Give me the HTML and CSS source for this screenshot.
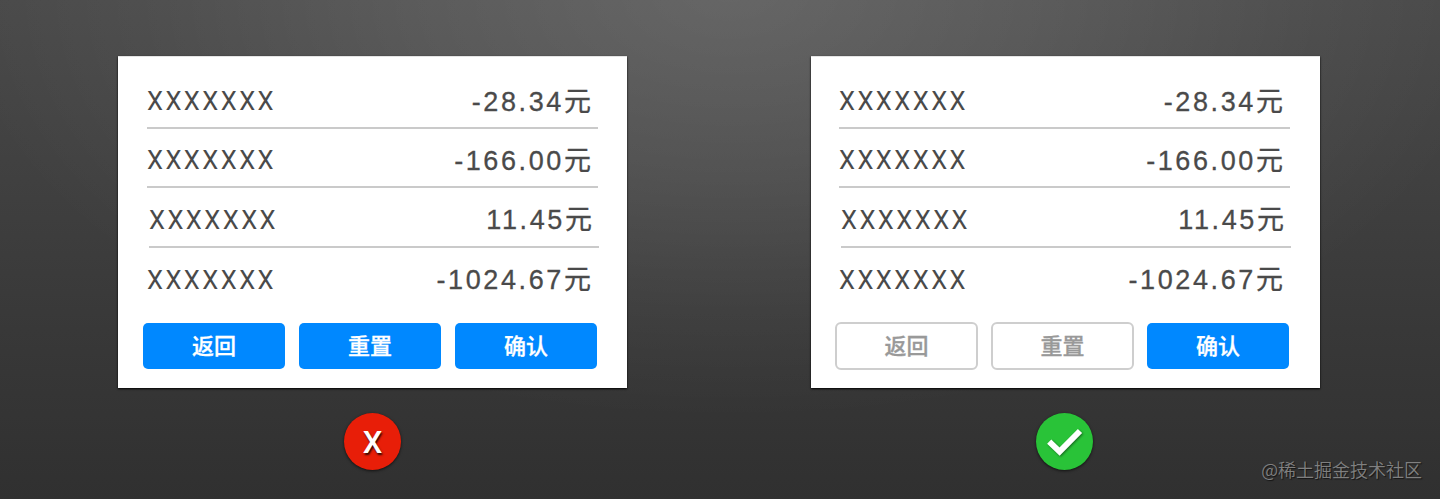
FILE: index.html
```html
<!DOCTYPE html>
<html lang="zh-CN">
<head>
<meta charset="utf-8">
<title>按钮主次对比</title>
<link rel="stylesheet" href="styles.css">
</head>
<body>
<main class="stage">
  <section class="example">
    <div class="card">
      <ul class="bill">
        <li class="row"><span class="name">XXXXXXX</span><span class="amount">-28.34元</span></li>
        <li class="row"><span class="name">XXXXXXX</span><span class="amount">-166.00元</span></li>
        <li class="row row-shifted"><span class="name">XXXXXXX</span><span class="amount">11.45元</span></li>
        <li class="row row-last"><span class="name">XXXXXXX</span><span class="amount">-1024.67元</span></li>
      </ul>
      <div class="actions">
        <button class="btn">返回</button>
        <button class="btn">重置</button>
        <button class="btn">确认</button>
      </div>
    </div>
    <div class="badge badge-bad"><span class="cross">X</span></div>
  </section>
  <section class="example">
    <div class="card card-good">
      <ul class="bill">
        <li class="row"><span class="name">XXXXXXX</span><span class="amount">-28.34元</span></li>
        <li class="row"><span class="name">XXXXXXX</span><span class="amount">-166.00元</span></li>
        <li class="row row-shifted"><span class="name">XXXXXXX</span><span class="amount">11.45元</span></li>
        <li class="row row-last"><span class="name">XXXXXXX</span><span class="amount">-1024.67元</span></li>
      </ul>
      <div class="actions">
        <button class="btn btn-outline">返回</button>
        <button class="btn btn-outline">重置</button>
        <button class="btn">确认</button>
      </div>
    </div>
    <div class="badge badge-good">
      <svg class="check" viewBox="0 0 57 57" width="57" height="57"><path d="M13.2 28.6 L23.6 38.6 L44 18" fill="none" stroke="#fff" stroke-width="6"/></svg>
    </div>
  </section>
  <div class="watermark">@稀土掘金技术社区</div>
</main>
</body>
</html>
```
FILE: styles.css
```css
* { box-sizing: border-box; }

body { margin: 0; }

.stage {
  position: relative;
  display: flex;
  gap: 184px;
  width: 1440px;
  height: 499px;
  padding: 56px 0 0 118px;
  overflow: hidden;
  background:
    radial-gradient(ellipse 780px 430px at 730px -10px, rgba(255,255,255,.16), rgba(255,255,255,.1) 40%, rgba(255,255,255,.035) 75%, rgba(255,255,255,0) 100%),
    linear-gradient(#494949 0, #404040 180px, #383838 330px, #303030 499px);
  font-family: "Liberation Sans", "Noto Sans CJK SC", sans-serif;
}

.example { width: 509px; }

.card {
  width: 509px;
  height: 332px;
  padding: 14px 30px 0 25px;
  background: #fff;
  box-shadow: 0 1px 2px #000, inset 0 1px 0 #e4e4e4;
}

.card-good { padding-left: 24px; }

.bill {
  margin: 0 0 0 4px;
  padding: 0;
  list-style: none;
}

.row {
  display: flex;
  justify-content: space-between;
  width: 451px;
  height: 59px;
  padding: 11px 4.5px 0 0;
  border-bottom: 2px solid #cacaca;
  color: #4a4a4a;
  line-height: 40px;
}

.row-shifted {
  width: 450px;
  height: 60px;
  margin-left: 2px;
  padding-top: 12px;
}

.row-last {
  height: 60px;
  padding-top: 12px;
  border-bottom: 0;
}

.name {
  font-family: Roboto, sans-serif;
  font-size: 25.5px;
  letter-spacing: 2.45px;
}

.amount {
  padding-top: 1px;
  font-size: 27px;
  letter-spacing: 2.6px;
  -webkit-text-stroke: .3px #4a4a4a;
}

.row-shifted .amount,
.row-last .amount { padding-top: 0; }

.actions {
  display: flex;
  align-items: center;
  gap: 14px;
  height: 48px;
  margin-top: 14px;
}

.btn {
  flex: none;
  width: 142px;
  height: 46px;
  padding: 0 0 3px;
  border: 0;
  border-radius: 5px;
  background: #0088ff;
  color: #fff;
  font: 500 22px/43px "Noto Sans CJK SC", sans-serif;
  -webkit-text-stroke: .3px currentColor;
}

.btn-outline {
  width: 143px;
  height: 48px;
  margin: 0 -1px 0 0;
  border: 2px solid #cecece;
  border-radius: 6px;
  background: #fff;
  color: #999;
  line-height: 41px;
}

.badge {
  display: flex;
  align-items: center;
  justify-content: center;
  width: 57px;
  height: 57px;
  margin: 25px 0 0 226px;
  border-radius: 50%;
  box-shadow: 0 1px 3px rgba(0,0,0,.65);
}

.badge-bad { background: #e81e08; }

.badge-good {
  margin-left: 225px;
  background: #29c338;
}

.cross {
  padding-top: 2px;
  color: #fff;
  font: 500 31px/57px Roboto, sans-serif;
  text-shadow: 1px 2px 2px rgba(0,0,0,.8);
}

.check { filter: drop-shadow(1px 1px 1px rgba(0,0,0,.45)); }

.watermark {
  position: absolute;
  right: 18px;
  bottom: 16px;
  color: #808080;
  font: 350 18px/28px "Noto Sans CJK SC", sans-serif;
  text-shadow: 1px 1px 1px rgba(0,0,0,.6);
}
```
